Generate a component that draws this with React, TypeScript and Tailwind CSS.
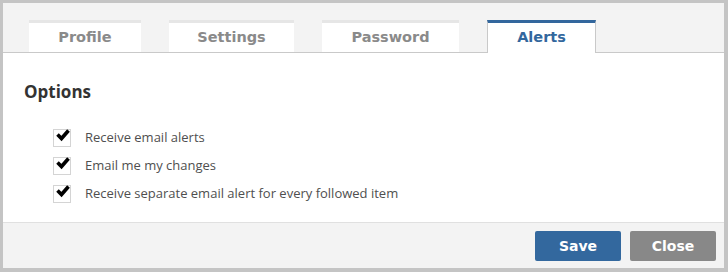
import React from "react";

const tabs = [
  { t: "Profile", w: "w-[112px]" },
  { t: "Settings", w: "w-[125px]" },
  { t: "Password", w: "w-[137px]" },
];
const options = [
  "Receive email alerts",
  "Email me my changes",
  "Receive separate email alert for every followed item",
];

function Check() {
  return (
    <div className="relative w-[18px] h-[18px] border border-[#d4d4d4] bg-white shrink-0">
      <svg
        className="absolute left-[1px] top-[-2px]"
        width="16"
        height="14"
        viewBox="0 0 16 14"
      >
        <polyline
          points="2.5,6.5 6.5,10.5 13.5,2.5"
          fill="none"
          stroke="#000"
          strokeWidth="3.6"
          strokeLinecap="butt"
          strokeLinejoin="miter"
        />
      </svg>
    </div>
  );
}

const tabFont = { fontFamily: '"DejaVu Sans", Verdana, sans-serif' };

export default function App() {
  return (
    <div className="w-[728px] h-[272px] bg-[#c4c4c4] pt-[3px] pl-[3px] pr-[4px] pb-[4px]">
      <div className="flex flex-col h-full bg-white">
        <div className="flex items-end gap-[28px] bg-[#f3f3f3] pt-[17px] pl-[26px] border-b border-[#c9c9c9] h-[50px]">
          {tabs.map(({ t, w }) => (
            <div
              key={t}
              className={`${w} h-[32px] bg-white border-t-[3px] border-[#e6e6e6] flex items-center justify-center text-[14.5px] font-bold text-[#8a8a8a]`}
              style={tabFont}
            >
              {t}
            </div>
          ))}
          <div
            className="w-[109px] h-[33px] -mb-px bg-white border-t-[3px] border-x border-t-[#33679d] border-x-[#c9c9c9] flex items-center justify-center text-[14.5px] font-bold text-[#33679d]"
            style={tabFont}
          >
            Alerts
          </div>
        </div>
        <div className="flex-1 pt-[27px] pl-[21px]">
          <div
            className="text-[17px] leading-[24px] font-bold text-[#333]"
            style={{ fontFamily: '"Open Sans", sans-serif' }}
          >
            Options
          </div>
          <div className="mt-[20px] pl-[29px] flex flex-col">
            {options.map((o) => (
              <div key={o} className="h-[28px] flex items-center gap-[14px]">
                <Check />
                <span
                  className="text-[13px] text-[#4f4f4f]"
                  style={{ fontFamily: '"Open Sans", sans-serif' }}
                >
                  {o}
                </span>
              </div>
            ))}
          </div>
        </div>
        <div className="h-[46px] bg-[#f3f3f3] border-t border-[#e0e0e0] flex justify-end items-start pt-[8px] pr-[8px] gap-[9px]">
          <button
            className="w-[86px] h-[30px] rounded-[2px] bg-[#33689e] text-white text-[14px] font-bold"
            style={tabFont}
          >
            Save
          </button>
          <button
            className="w-[86px] h-[30px] rounded-[2px] bg-[#888888] text-white text-[14px] font-bold"
            style={tabFont}
          >
            Close
          </button>
        </div>
      </div>
    </div>
  );
}
